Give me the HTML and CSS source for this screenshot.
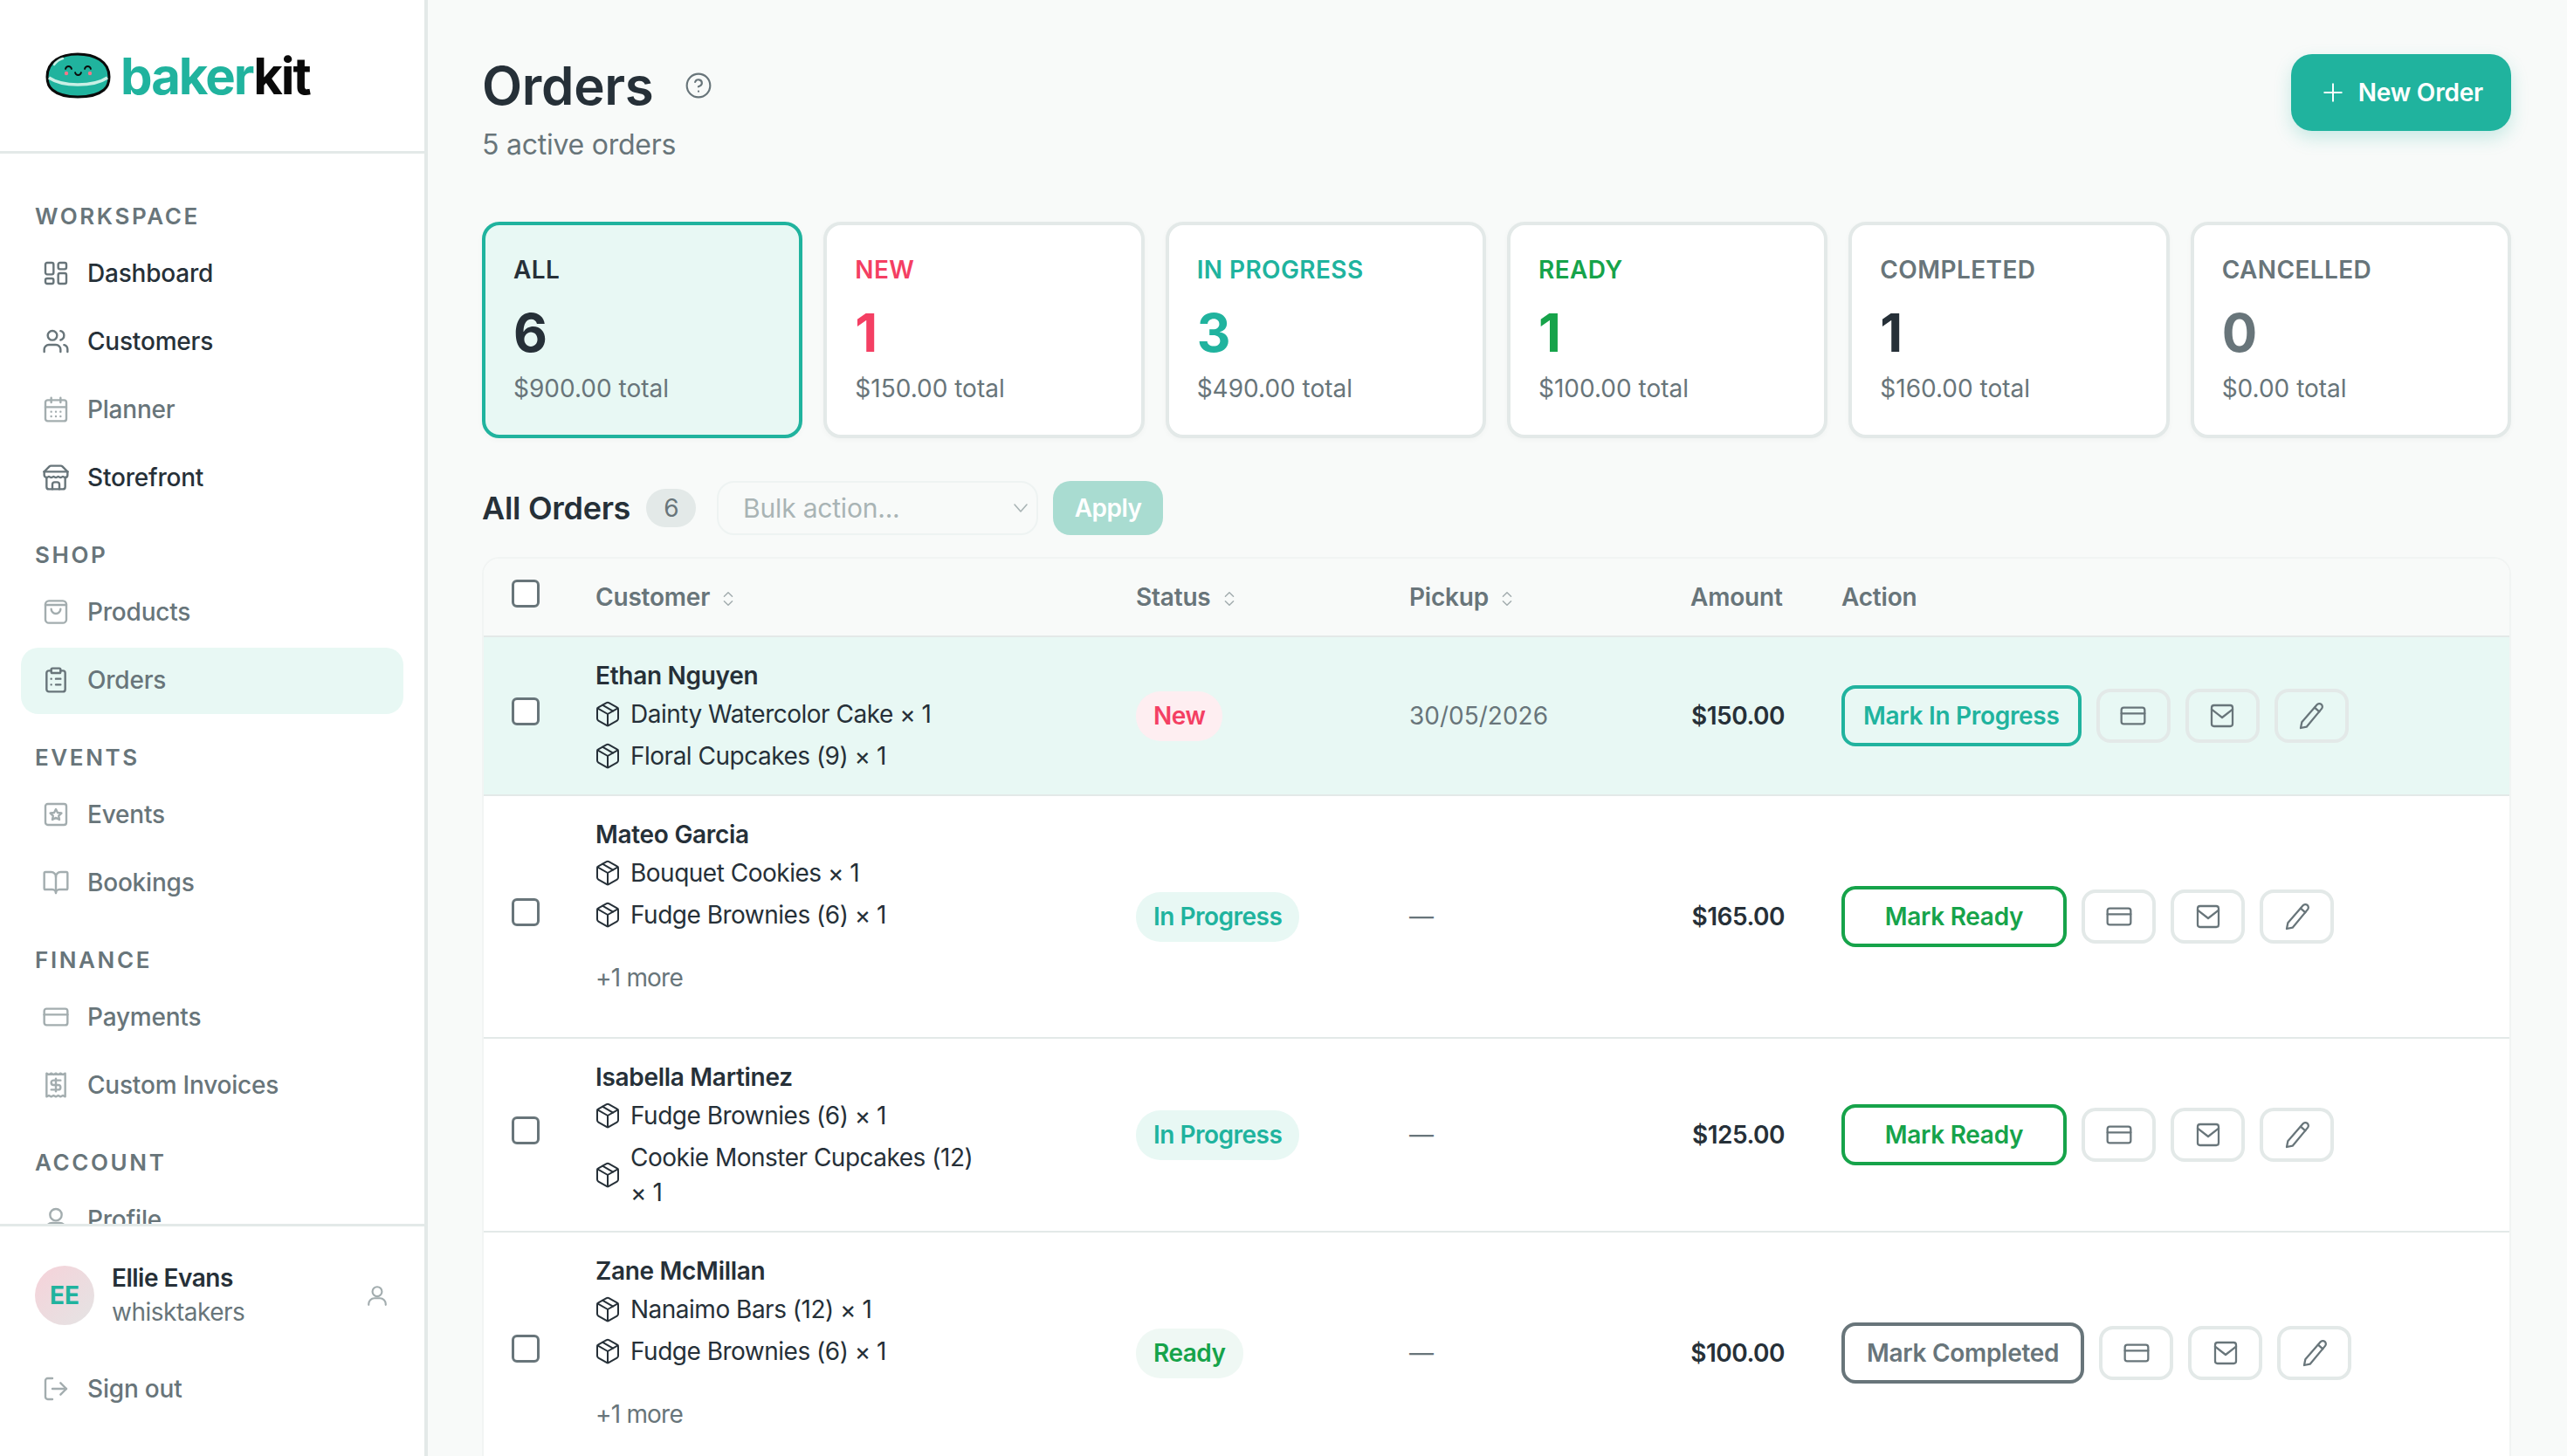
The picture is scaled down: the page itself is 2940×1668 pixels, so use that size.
FILE: index.html
```html
<!DOCTYPE html>
<html lang="en">
<head>
  <meta charset="UTF-8">
  <title>Orders - bakerkit</title>
  <link rel="stylesheet" href="styles.css">
</head>
<body>
  <svg class="icon-sheet" width="0" height="0">
    <symbol id="i-dashboard" viewBox="0 0 24 24"><rect x="3" y="3" width="7" height="10" rx="1.5"/><rect x="14" y="3" width="7" height="5.5" rx="1.5"/><rect x="14" y="12" width="7" height="9" rx="1.5"/><rect x="3" y="16.5" width="7" height="4.5" rx="1.5"/></symbol>
    <symbol id="i-users" viewBox="0 0 24 24"><path d="M16 21v-2a4 4 0 0 0-4-4H6a4 4 0 0 0-4 4v2"/><circle cx="9" cy="7" r="4"/><path d="M22 21v-2a4 4 0 0 0-3-3.87"/><path d="M16 3.13a4 4 0 0 1 0 7.75"/></symbol>
    <symbol id="i-calendar" viewBox="0 0 24 24"><rect x="3" y="4" width="18" height="18" rx="2"/><path d="M16 2v4M8 2v4M3 10h18M8 14h.01M12 14h.01M16 14h.01M8 18h.01M12 18h.01M16 18h.01"/></symbol>
    <symbol id="i-store" viewBox="0 0 24 24"><path d="m2 7 4.41-4.41A2 2 0 0 1 7.83 2h8.34a2 2 0 0 1 1.42.59L22 7"/><path d="M4 12v8a2 2 0 0 0 2 2h12a2 2 0 0 0 2-2v-8"/><path d="M15 22v-4a2 2 0 0 0-2-2h-2a2 2 0 0 0-2 2v4"/><path d="M2 7h20"/><path d="M22 7v3a2 2 0 0 1-2 2 2.7 2.7 0 0 1-1.59-.63.7.7 0 0 0-.82 0A2.7 2.7 0 0 1 16 12a2.7 2.7 0 0 1-1.59-.63.7.7 0 0 0-.82 0A2.7 2.7 0 0 1 12 12a2.7 2.7 0 0 1-1.59-.63.7.7 0 0 0-.82 0A2.7 2.7 0 0 1 8 12a2.7 2.7 0 0 1-1.59-.63.7.7 0 0 0-.82 0A2.7 2.7 0 0 1 4 12a2 2 0 0 1-2-2V7"/></symbol>
    <symbol id="i-bag" viewBox="0 0 24 24"><rect x="3" y="2.5" width="18" height="19" rx="3"/><path d="M3 6h18M8 9.5a4 4 0 0 0 8 0"/></symbol>
    <symbol id="i-clipboard" viewBox="0 0 24 24"><rect x="8" y="2" width="8" height="4" rx="1"/><path d="M16 4h2a2 2 0 0 1 2 2v14a2 2 0 0 1-2 2H6a2 2 0 0 1-2-2V6a2 2 0 0 1 2-2h2"/><path d="M12 11h4M12 16h4M8 11h.01M8 16h.01"/></symbol>
    <symbol id="i-event" viewBox="0 0 24 24"><rect x="3" y="3" width="18" height="18" rx="2"/><path d="m12 7.5 1.5 3 3.3.4-2.4 2.3.6 3.3-3-1.6-3 1.6.6-3.3-2.4-2.3 3.3-.4z"/></symbol>
    <symbol id="i-book" viewBox="0 0 24 24"><path d="M12 7v14"/><path d="M3 18a1 1 0 0 1-1-1V4a1 1 0 0 1 1-1h5a4 4 0 0 1 4 4 4 4 0 0 1 4-4h5a1 1 0 0 1 1 1v13a1 1 0 0 1-1 1h-6a3 3 0 0 0-3 3 3 3 0 0 0-3-3z"/></symbol>
    <symbol id="i-card" viewBox="0 0 24 24"><rect x="2" y="5" width="20" height="14" rx="2"/><path d="M2 10h20"/></symbol>
    <symbol id="i-receipt" viewBox="0 0 24 24"><path d="M4 2v20l2-1 2 1 2-1 2 1 2-1 2 1 2-1 2 1V2l-2 1-2-1-2 1-2-1-2 1-2-1-2 1Z"/><path d="M16 8h-6a2 2 0 1 0 0 4h4a2 2 0 1 1 0 4H8"/><path d="M12 17.5v-11"/></symbol>
    <symbol id="i-user" viewBox="0 0 24 24"><circle cx="12" cy="8" r="5"/><path d="M3 22v-1a6 6 0 0 1 6-6h6a6 6 0 0 1 6 6v1"/></symbol>
    <symbol id="i-signout" viewBox="0 0 24 24"><path d="M9 21H5a2 2 0 0 1-2-2V5a2 2 0 0 1 2-2h4"/><path d="m16 17 5-5-5-5"/><path d="M21 12H9"/></symbol>
    <symbol id="i-package" viewBox="0 0 24 24"><path d="M11 21.73a2 2 0 0 0 2 0l7-4A2 2 0 0 0 21 16V8a2 2 0 0 0-1-1.73l-7-4a2 2 0 0 0-2 0l-7 4A2 2 0 0 0 3 8v8a2 2 0 0 0 1 1.73z"/><path d="M12 22V12"/><path d="m3.3 7 8.7 5 8.7-5"/><path d="m7.5 4.27 9 5.15"/></symbol>
    <symbol id="i-help" viewBox="0 0 24 24"><circle cx="12" cy="12" r="10"/><path d="M9.09 9a3 3 0 0 1 5.83 1c0 2-3 3-3 3"/><path d="M12 17h.01"/></symbol>
    <symbol id="i-plus" viewBox="0 0 24 24"><path d="M12 3v18M3 12h18"/></symbol>
    <symbol id="i-sort" viewBox="0 0 24 24"><path d="m7 9 5-5 5 5M7 15l5 5 5-5"/></symbol>
    <symbol id="i-chevron" viewBox="0 0 24 24"><path d="m5 8 7 8 7-8"/></symbol>
    <symbol id="i-mail" viewBox="0 0 24 24"><rect x="3" y="3" width="18" height="18" rx="2"/><path d="m3 6.5 9 7 9-7"/></symbol>
    <symbol id="i-pencil" viewBox="0 0 24 24"><path d="M17 2.5a2.6 2.6 0 1 1 4 3.4L8 21.5l-5 1 1-5Z"/><path d="m15 5 4 3.5"/></symbol>
  </svg>

  <aside class="sidebar">
    <div class="brand">
      <svg class="brand-mark" viewBox="0 0 75 53">
        <path d="M2 28C2 10 18 2 37 2s36 8 36 26c0 6-1 11-6 15-7 6-18 8-30 8s-22-2-29-8C3 39 2 34 2 28Z" fill="#20b39e" stroke="#0a0a0a" stroke-width="3"/>
        <path d="M4 29c9 6 21 8 33 8s25-2 34-8" fill="none" stroke="#c9efe5" stroke-width="3.5"/>
        <path d="M10 14c3-4 6-6 10-7" fill="none" stroke="#c9efe5" stroke-width="2.5" stroke-linecap="round"/>
        <path d="M23 19c1-4 6-4 7 0M45 19c1-4 6-4 7 0M34 23c1 4 6 4 7 0" fill="none" stroke="#0a0a0a" stroke-width="1.8" stroke-linecap="round"/>
        <circle cx="24" cy="24" r="2.2" fill="#f5778a"/>
        <circle cx="51" cy="24" r="2.2" fill="#f5778a"/>
      </svg>
      <span class="brand-name">baker<span class="brand-kit">kit</span></span>
    </div>

    <nav class="side-nav">
      <div class="nav-title">Workspace</div>
      <a class="nav-item strong"><svg class="nav-icon"><use href="#i-dashboard"/></svg>Dashboard</a>
      <a class="nav-item strong"><svg class="nav-icon"><use href="#i-users"/></svg>Customers</a>
      <a class="nav-item"><svg class="nav-icon"><use href="#i-calendar"/></svg>Planner</a>
      <a class="nav-item strong"><svg class="nav-icon"><use href="#i-store"/></svg>Storefront</a>

      <div class="nav-title">Shop</div>
      <a class="nav-item"><svg class="nav-icon"><use href="#i-bag"/></svg>Products</a>
      <a class="nav-item active"><svg class="nav-icon"><use href="#i-clipboard"/></svg>Orders</a>

      <div class="nav-title">Events</div>
      <a class="nav-item"><svg class="nav-icon"><use href="#i-event"/></svg>Events</a>
      <a class="nav-item"><svg class="nav-icon"><use href="#i-book"/></svg>Bookings</a>

      <div class="nav-title">Finance</div>
      <a class="nav-item"><svg class="nav-icon"><use href="#i-card"/></svg>Payments</a>
      <a class="nav-item"><svg class="nav-icon"><use href="#i-receipt"/></svg>Custom Invoices</a>

      <div class="nav-title">Account</div>
      <a class="nav-item"><svg class="nav-icon"><use href="#i-user"/></svg>Profile</a>
    </nav>

    <div class="side-foot">
      <div class="user-row">
        <div class="avatar">EE</div>
        <div class="user-text">
          <div class="user-name">Ellie Evans</div>
          <div class="user-org">whisktakers</div>
        </div>
        <svg class="user-icon"><use href="#i-user"/></svg>
      </div>
      <a class="nav-item"><svg class="nav-icon"><use href="#i-signout"/></svg>Sign out</a>
    </div>
  </aside>

  <main class="main">
    <header class="page-head">
      <div>
        <div class="title-row">
          <h1>Orders</h1>
          <svg class="help-icon"><use href="#i-help"/></svg>
        </div>
        <p class="subtitle">5 active orders</p>
      </div>
      <button class="new-btn"><svg class="plus-icon"><use href="#i-plus"/></svg>New Order</button>
    </header>

    <section class="stats">
      <div class="stat selected"><div class="stat-label">All</div><div class="stat-num">6</div><div class="stat-total">$900.00 total</div></div>
      <div class="stat new"><div class="stat-label">New</div><div class="stat-num">1</div><div class="stat-total">$150.00 total</div></div>
      <div class="stat progress"><div class="stat-label">In Progress</div><div class="stat-num">3</div><div class="stat-total">$490.00 total</div></div>
      <div class="stat ready"><div class="stat-label">Ready</div><div class="stat-num">1</div><div class="stat-total">$100.00 total</div></div>
      <div class="stat completed"><div class="stat-label">Completed</div><div class="stat-num">1</div><div class="stat-total">$160.00 total</div></div>
      <div class="stat cancelled"><div class="stat-label">Cancelled</div><div class="stat-num">0</div><div class="stat-total">$0.00 total</div></div>
    </section>

    <div class="list-bar">
      <h2>All Orders</h2>
      <span class="count">6</span>
      <div class="bulk-select">Bulk action...<svg class="bulk-chevron"><use href="#i-chevron"/></svg></div>
      <button class="apply-btn">Apply</button>
    </div>

    <div class="table-wrap">
      <table class="orders">
        <colgroup>
          <col class="c-check"><col class="c-customer"><col class="c-status"><col class="c-pickup"><col class="c-amount"><col>
        </colgroup>
        <thead>
          <tr>
            <th class="check-cell"><span class="checkbox"></span></th>
            <th>Customer<svg class="sort-icon"><use href="#i-sort"/></svg></th>
            <th>Status<svg class="sort-icon"><use href="#i-sort"/></svg></th>
            <th>Pickup<svg class="sort-icon"><use href="#i-sort"/></svg></th>
            <th class="amount">Amount</th>
            <th class="action-cell">Action</th>
          </tr>
        </thead>
        <tbody>
          <tr class="is-new">
            <td class="check-cell"><span class="checkbox"></span></td>
            <td class="customer">
              <div class="cust-name">Ethan Nguyen</div>
              <div class="line-item"><svg class="box-icon"><use href="#i-package"/></svg><span>Dainty Watercolor Cake × 1</span></div>
              <div class="line-item"><svg class="box-icon"><use href="#i-package"/></svg><span>Floral Cupcakes (9) × 1</span></div>
            </td>
            <td><span class="badge badge-new">New</span></td>
            <td class="pickup">30/05/2026</td>
            <td class="amount">$150.00</td>
            <td class="action-cell">
              <div class="actions">
                <button class="step-btn to-progress">Mark In Progress</button>
                <button class="icon-btn"><svg class="btn-icon"><use href="#i-card"/></svg></button>
                <button class="icon-btn"><svg class="btn-icon"><use href="#i-mail"/></svg></button>
                <button class="icon-btn"><svg class="btn-icon"><use href="#i-pencil"/></svg></button>
              </div>
            </td>
          </tr>
          <tr>
            <td class="check-cell"><span class="checkbox"></span></td>
            <td class="customer">
              <div class="cust-name">Mateo Garcia</div>
              <div class="line-item"><svg class="box-icon"><use href="#i-package"/></svg><span>Bouquet Cookies × 1</span></div>
              <div class="line-item"><svg class="box-icon"><use href="#i-package"/></svg><span>Fudge Brownies (6) × 1</span></div>
              <div class="more">+1 more</div>
            </td>
            <td><span class="badge badge-progress">In Progress</span></td>
            <td class="pickup">—</td>
            <td class="amount">$165.00</td>
            <td class="action-cell">
              <div class="actions">
                <button class="step-btn to-ready">Mark Ready</button>
                <button class="icon-btn"><svg class="btn-icon"><use href="#i-card"/></svg></button>
                <button class="icon-btn"><svg class="btn-icon"><use href="#i-mail"/></svg></button>
                <button class="icon-btn"><svg class="btn-icon"><use href="#i-pencil"/></svg></button>
              </div>
            </td>
          </tr>
          <tr>
            <td class="check-cell"><span class="checkbox"></span></td>
            <td class="customer">
              <div class="cust-name">Isabella Martinez</div>
              <div class="line-item"><svg class="box-icon"><use href="#i-package"/></svg><span>Fudge Brownies (6) × 1</span></div>
              <div class="line-item"><svg class="box-icon"><use href="#i-package"/></svg><span>Cookie Monster Cupcakes (12) × 1</span></div>
            </td>
            <td><span class="badge badge-progress">In Progress</span></td>
            <td class="pickup">—</td>
            <td class="amount">$125.00</td>
            <td class="action-cell">
              <div class="actions">
                <button class="step-btn to-ready">Mark Ready</button>
                <button class="icon-btn"><svg class="btn-icon"><use href="#i-card"/></svg></button>
                <button class="icon-btn"><svg class="btn-icon"><use href="#i-mail"/></svg></button>
                <button class="icon-btn"><svg class="btn-icon"><use href="#i-pencil"/></svg></button>
              </div>
            </td>
          </tr>
          <tr>
            <td class="check-cell"><span class="checkbox"></span></td>
            <td class="customer">
              <div class="cust-name">Zane McMillan</div>
              <div class="line-item"><svg class="box-icon"><use href="#i-package"/></svg><span>Nanaimo Bars (12) × 1</span></div>
              <div class="line-item"><svg class="box-icon"><use href="#i-package"/></svg><span>Fudge Brownies (6) × 1</span></div>
              <div class="more">+1 more</div>
            </td>
            <td><span class="badge badge-ready">Ready</span></td>
            <td class="pickup">—</td>
            <td class="amount">$100.00</td>
            <td class="action-cell">
              <div class="actions">
                <button class="step-btn to-completed">Mark Completed</button>
                <button class="icon-btn"><svg class="btn-icon"><use href="#i-card"/></svg></button>
                <button class="icon-btn"><svg class="btn-icon"><use href="#i-mail"/></svg></button>
                <button class="icon-btn"><svg class="btn-icon"><use href="#i-pencil"/></svg></button>
              </div>
            </td>
          </tr>
        </tbody>
      </table>
    </div>
  </main>
</body>
</html>
```

FILE: styles.css
```css
:root {
  --teal: #20b39e;
  --teal-soft: #e8f8f4;
  --rose: #f43f63;
  --green: #16a34a;
  --ink: #263038;
  --muted: #68757a;
  --faint: #a3adaf;
  --line: #e3e9e8;
  --page: #f8faf9;
}

* {
  margin: 0;
  padding: 0;
  box-sizing: border-box;
}

html, body {
  height: 100%;
}

body {
  display: flex;
  overflow: hidden;
  font-family: Inter, "Liberation Sans", sans-serif;
  font-size: 28px;
  letter-spacing: -0.5px;
  line-height: 40px;
  color: var(--ink);
  background-color: var(--page);
}

button {
  font: inherit;
  letter-spacing: inherit;
  background: none;
  border: none;
}

svg use {
  fill: none;
  stroke: currentColor;
  stroke-linecap: round;
  stroke-linejoin: round;
}

.icon-sheet {
  position: absolute;
}

/* sidebar */
.sidebar {
  display: flex;
  flex-direction: column;
  flex: none;
  width: 490px;
  height: 100%;
  background-color: white;
  border-right: 4px solid var(--line);
}

.brand {
  display: flex;
  align-items: center;
  gap: 11px;
  flex: none;
  height: 176px;
  padding-left: 52px;
  border-bottom: 3px solid var(--line);
}

.brand-mark {
  width: 75px;
  height: 53px;
  flex: none;
}

.brand-name {
  font-size: 58px;
  font-weight: 700;
  letter-spacing: -2px;
  line-height: 58px;
  color: var(--teal);
}

.brand-kit {
  color: #0a0a0a;
}

.side-nav {
  flex: 1;
  min-height: 0;
  overflow: hidden;
  padding: 54px 24px 0 24px;
}

.nav-title {
  height: 36px;
  margin: 32px 0 10px 16px;
  font-size: 26px;
  font-weight: 600;
  line-height: 36px;
  letter-spacing: 2.6px;
  text-transform: uppercase;
  color: var(--muted);
}

.nav-title:first-child {
  margin-top: 0;
}

.nav-item {
  display: flex;
  align-items: center;
  gap: 20px;
  height: 76px;
  margin-bottom: 2px;
  padding-left: 24px;
  padding-bottom: 2px;
  border-radius: 20px;
  font-weight: 500;
  letter-spacing: -0.2px;
  color: var(--muted);
}

.nav-icon {
  flex: none;
  width: 32px;
  height: 32px;
  stroke-width: 1.8;
  color: var(--faint);
}

.nav-item.strong {
  color: var(--ink);
}

.nav-item.strong .nav-icon,
.nav-item.active .nav-icon {
  color: var(--muted);
}

.nav-item.active {
  background-color: var(--teal-soft);
}

.side-foot {
  flex: none;
  height: 266px;
  padding: 40px 24px 0 24px;
  border-top: 3px solid var(--line);
}

.user-row {
  display: flex;
  align-items: center;
  gap: 20px;
  height: 78px;
  margin-bottom: 31px;
  padding-left: 16px;
}

.avatar {
  display: flex;
  align-items: center;
  justify-content: center;
  flex: none;
  width: 68px;
  height: 68px;
  border-radius: 50%;
  background: linear-gradient(135deg, #f6d2d9, #e4e4e4);
  font-size: 28px;
  font-weight: 700;
  letter-spacing: 0;
  color: var(--teal);
}

.user-text {
  flex: 1;
  line-height: 39px;
}

.user-name {
  font-weight: 600;
}

.user-org {
  color: var(--muted);
}

.user-icon {
  flex: none;
  width: 26px;
  height: 28px;
  margin-right: 17px;
  stroke-width: 2;
  color: var(--faint);
}

/* main column */
.main {
  flex: 1;
  min-width: 0;
  padding: 62px 64px 0 62px;
}

.page-head {
  display: flex;
  justify-content: space-between;
  align-items: flex-start;
  margin-bottom: 68px;
}

.title-row {
  display: flex;
  align-items: center;
  gap: 35px;
}

h1 {
  font-size: 60px;
  font-weight: 600;
  letter-spacing: -0.3px;
  line-height: 72px;
}

.help-icon {
  width: 32px;
  height: 32px;
  stroke-width: 1.6;
  color: var(--muted);
}

.subtitle {
  margin-top: 12px;
  font-size: 32px;
  letter-spacing: -0.25px;
  color: var(--muted);
}

.new-btn {
  display: flex;
  align-items: center;
  gap: 16px;
  height: 88px;
  padding: 0 32px 0 35px;
  border-radius: 24px;
  background-color: var(--teal);
  box-shadow: 0 8px 20px rgba(32, 179, 158, 0.22);
  font-weight: 600;
  letter-spacing: -0.2px;
  color: white;
}

.plus-icon {
  width: 26px;
  height: 26px;
  stroke-width: 1.8;
}

.stats {
  display: grid;
  grid-template-columns: repeat(6, 1fr);
  gap: 24px;
  margin-bottom: 49px;
}

.stat {
  padding: 31px 32px 33px;
  background-color: white;
  border: 4px solid var(--line);
  border-radius: 20px;
  box-shadow: 0 2px 6px rgba(0, 0, 0, 0.03);
}

.stat-label {
  font-weight: 600;
  letter-spacing: 0.4px;
  text-transform: uppercase;
}

.stat-num {
  margin-top: 16px;
  font-size: 60px;
  font-weight: 700;
  line-height: 72px;
}

.stat-total {
  margin-top: 8px;
  letter-spacing: 0;
  color: var(--muted);
}

.stat.selected {
  background-color: var(--teal-soft);
  border-color: var(--teal);
}

.stat.new .stat-label, .stat.new .stat-num { color: var(--rose); }
.stat.progress .stat-label, .stat.progress .stat-num { color: var(--teal); }
.stat.ready .stat-label, .stat.ready .stat-num { color: var(--green); }
.stat.completed .stat-label { color: var(--muted); }
.stat.cancelled .stat-label, .stat.cancelled .stat-num { color: var(--muted); }

.list-bar {
  display: flex;
  align-items: center;
  height: 62px;
  margin-bottom: 25px;
}

h2 {
  font-size: 36px;
  font-weight: 600;
  letter-spacing: -0.3px;
}

.count {
  width: 57px;
  height: 44px;
  margin: 0 24px 0 18px;
  border-radius: 22px;
  background-color: var(--line);
  font-size: 28px;
  line-height: 44px;
  text-align: center;
  color: var(--muted);
}

.bulk-select {
  display: flex;
  align-items: center;
  justify-content: space-between;
  width: 368px;
  height: 62px;
  margin-right: 17px;
  padding: 0 6px 0 28px;
  border: 2px solid #eef3f2;
  border-radius: 20px;
  font-size: 30px;
  letter-spacing: -0.2px;
  color: #a9b4b5;
}

.bulk-chevron {
  width: 24px;
  height: 24px;
  stroke-width: 1.6;
}

.apply-btn {
  width: 126px;
  height: 62px;
  border-radius: 20px;
  background-color: #a9dcd1;
  font-weight: 600;
  color: white;
}

.table-wrap {
  overflow: hidden;
  background-color: white;
  border: 2px solid #f1f4f3;
  border-bottom: none;
  border-radius: 20px 20px 0 0;
}

.orders {
  width: 100%;
  table-layout: fixed;
  border-collapse: separate;
  border-spacing: 0;
}

.c-check { width: 128px; }
.c-customer { width: 619px; }
.c-status { width: 313px; }
.c-pickup { width: 322px; }
.c-amount { width: 108px; }

.orders th {
  height: 90px;
  background-color: var(--page);
  border-bottom: 2px solid var(--line);
  font-size: 28px;
  font-weight: 600;
  letter-spacing: -0.2px;
  text-align: left;
  color: var(--muted);
}

.orders td {
  vertical-align: middle;
  border-bottom: 2px solid var(--line);
}

.is-new td {
  background-color: var(--teal-soft);
}

.check-cell {
  padding-left: 32px;
  padding-bottom: 10px;
}

.orders th.check-cell {
  padding-bottom: 8px;
}

.checkbox {
  display: block;
  width: 32px;
  height: 32px;
  background-color: white;
  border: 3px solid var(--muted);
  border-radius: 6px;
}

.sort-icon {
  width: 22px;
  height: 24px;
  margin-left: 10px;
  vertical-align: -4px;
  stroke-width: 1.6;
  color: var(--faint);
}

.customer {
  padding: 24px 40px 24px 0;
}

.cust-name {
  margin-bottom: 4px;
  font-weight: 600;
  letter-spacing: -0.3px;
}

.line-item {
  display: flex;
  align-items: center;
  gap: 10px;
  margin-bottom: 8px;
  max-width: 440px;
}

.line-item:last-of-type {
  margin-bottom: 0;
}

.box-icon {
  flex: none;
  width: 32px;
  height: 32px;
  margin-left: -2px;
  stroke-width: 1.5;
}

.more {
  margin: 32px 0 24px;
  letter-spacing: -0.8px;
  color: var(--muted);
}

.badge {
  display: inline-block;
  height: 57px;
  padding: 0 20px;
  border-radius: 28px;
  font-weight: 600;
  line-height: 57px;
}

.badge-new { background-color: #feeef1; color: var(--rose); }
.badge-progress { background-color: var(--teal-soft); color: var(--teal); }
.badge-ready { background-color: #eff8f4; color: var(--green); }

.pickup {
  letter-spacing: 0;
  color: var(--muted);
}

.amount {
  font-weight: 600;
  text-align: right;
}

.orders th.amount {
  color: var(--muted);
}

.action-cell {
  padding-left: 65px;
}

.actions {
  display: flex;
  align-items: center;
  gap: 17px;
}

.step-btn {
  height: 70px;
  padding: 0 21px;
  border: 4px solid;
  border-radius: 16px;
  font-weight: 600;
  letter-spacing: -0.3px;
}

.to-progress { color: var(--teal); }
.to-ready { min-width: 258px; color: var(--green); }
.to-completed { padding: 0 25px; color: var(--muted); }

.icon-btn {
  display: flex;
  align-items: center;
  justify-content: center;
  width: 85px;
  height: 62px;
  border: 4px solid var(--line);
  border-radius: 16px;
  color: var(--muted);
}

.btn-icon {
  width: 32px;
  height: 32px;
  stroke-width: 1.7;
}
```
